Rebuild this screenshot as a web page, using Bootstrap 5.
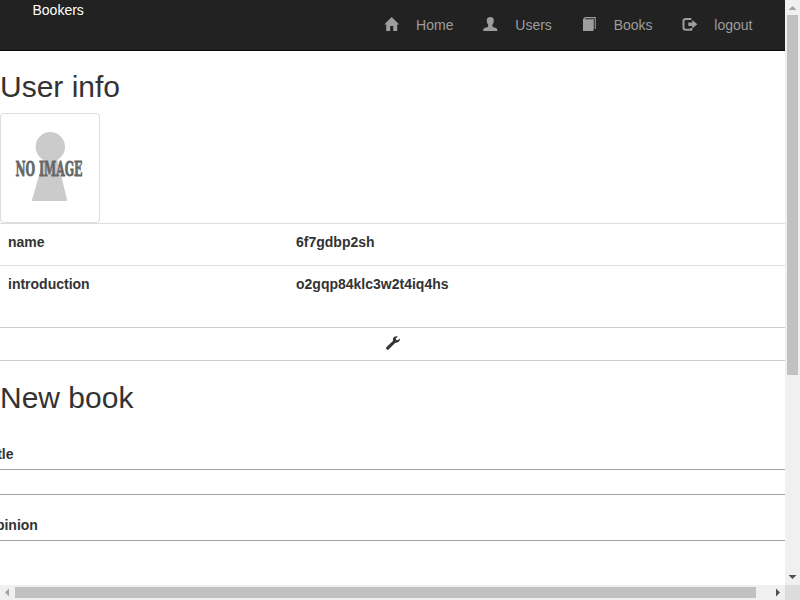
<!DOCTYPE html>
<html lang="en">
<head>
<meta charset="utf-8">
<meta name="viewport" content="width=device-width, initial-scale=1">
<title>Bookers</title>
<link href="https://cdn.jsdelivr.net/npm/bootstrap@5.3.0/dist/css/bootstrap.min.css" rel="stylesheet">
<style>
body{font:14px/20px "Liberation Sans",Arial,sans-serif;color:#333;background:#fff}
.window{display:grid;grid-template:585px 15px/785px 15px;width:800px;height:600px}
.topbar{height:51px;background:#222;border-bottom:1px solid #080808}
.brand{margin-left:32.5px;color:#fff;height:20px}
.menu{margin-right:17.5px}
.menu a{color:#9d9d9d;padding:15px;line-height:20px;text-decoration:none;white-space:nowrap}
.menu svg{width:14px;height:14px;margin-right:17.8px;flex:none;overflow:visible}
h2{font-size:30px;line-height:33px;font-weight:400;margin:0 0 10px}
.user-title{margin-top:19px}
.book-title{margin-top:20px;margin-bottom:30px}
.thumb{width:100px;height:110px;border:1px solid #ddd;border-radius:4px}
.thumb svg{display:block;width:98px;height:108px}
.info{border-top:1px solid #ddd;height:42px}
.info.tall{height:62px}
.info>div{padding:8px;font-weight:700}
.info>div:first-child{width:288px}
.edit{height:34px;border:solid #ccc;border-width:1px 0}
.edit svg{width:14px;height:14px;margin-bottom:2px}
.field-label{display:block;font-weight:700;height:25px;margin-left:-15px;white-space:nowrap}
.field{height:26px;border:solid #a2a2a2;border-width:1px 0;margin-bottom:20px}
.field.area{height:80px}
.bar{background:#f0f0f0}
.bar svg{width:15px;height:15px;flex:none}
.thumb-y{width:11px;height:360px;background:#c1c1c1}
.thumb-x{width:741px;height:11px;background:#c1c1c1}
.corner{background:#dcdcdc}
</style>
<script src="https://cdn.jsdelivr.net/npm/bootstrap@5.3.0/dist/js/bootstrap.bundle.min.js"></script>
</head>
<body class="overflow-hidden">
<div class="window">
<div class="overflow-hidden">
  <header class="topbar d-flex justify-content-between align-items-start">
    <div class="brand">Bookers</div>
    <nav class="menu d-flex">
      <a class="d-flex" href="#"><svg viewBox="0 0 14 14"><path transform="translate(.2 2)" fill="#9d9d9d" d="M7.500 0L15 7.400H13V14H9V9H6V14H2V7.400H0L7.500 0z"/></svg><span>Home</span></a>
      <a class="d-flex" href="#"><svg viewBox="0 0 14 14"><path transform="translate(.3 2)" fill="#9d9d9d" d="M7 0C9.500 0 10.500 1.500 10.500 3.500C10.500 5.500 9.900 6.600 9.200 7.500V9.400C9.700 10.400 14 10.500 14 12.500V14H0V12.500C0 10.500 4.300 10.400 4.800 9.400V7.500C4.100 6.600 3.500 5.500 3.500 3.500C3.500 1.500 4.500 0 7 0z"/></svg><span>Users</span></a>
      <a class="d-flex" href="#"><svg viewBox="0 0 14 14"><g transform="translate(.4 2)" fill="#9d9d9d"><path d="M.6 3H11V14H.6z"/><path d="M.6 3V2L2.600 0H13.400V12H12.400V1.200H3.200L2.200 2.200H11.600V12.500H11V3z"/></g></svg><span>Books</span></a>
      <a class="d-flex" href="#"><svg viewBox="0 0 14 14"><g transform="translate(-.7 2)"><path d="M9 2H3.500Q1.200 2 1.200 4.300V10.500Q1.200 12.800 3.500 12.800H9V11" fill="none" stroke="#9d9d9d" stroke-width="2"/><path fill="#9d9d9d" d="M6 5.500H10V3L15 7.300L10 11.500V9H6z"/></g></svg><span>logout</span></a>
    </nav>
  </header>
  <main>
    <h2 class="user-title">User info</h2>
    <div class="thumb"><svg viewBox="0 0 98 108"><g fill="#cbcbcb"><circle cx="49.300" cy="32.800" r="14.700"/><path d="M43 44H56L66.300 87H30.700z"/></g><text x="14.500" y="62.300" font-family="DejaVu Serif,serif" font-weight="700" font-size="20.500" textLength="67" lengthAdjust="spacingAndGlyphs" fill="#666" stroke="#666" stroke-width=".8">NO IMAGE</text></svg></div>
    <div class="info d-flex"><div>name</div><div>6f7gdbp2sh</div></div>
    <div class="info tall d-flex"><div>introduction</div><div>o2gqp84klc3w2t4iq4hs</div></div>
    <div class="edit d-flex justify-content-center align-items-center"><svg viewBox="0 0 14 14"><path d="M1.700 12.200L8 6" stroke="#333" stroke-width="3.100" stroke-linecap="round"/><path fill="#333" d="M11.800.4L9.800 2.600L10.200 4L11.600 4.300L13.800 2.500C14.100 4.300 13.300 5.600 12 6.200C11 6.700 9.800 6.800 8.800 6.500L7 5C6.700 3 7.200 1.700 8.500.8C9.400 0 10.700 0 11.800.4z"/></svg></div>
    <h2 class="book-title">New book</h2>
    <label class="field-label">Title</label>
    <div class="field"></div>
    <label class="field-label">Opinion</label>
    <div class="field area"></div>
  </main>
</div>
<div class="bar d-flex flex-column align-items-center">
  <svg viewBox="0 0 15 15"><path fill="#a3a3a3" d="M3.500 10H11.500L7.500 6z"/></svg><div class="thumb-y"></div>
  <svg class="mt-auto" viewBox="0 0 15 15"><path fill="#505050" d="M3.500 5H11.500L7.500 9z"/></svg>
</div>
<div class="bar d-flex align-items-center">
  <svg viewBox="0 0 15 15"><path fill="#a3a3a3" d="M9 3.500V11.500L5 7.500z"/></svg><div class="thumb-x"></div>
  <svg class="ms-auto" viewBox="0 0 15 15"><path fill="#505050" d="M6 3.500V11.500L10 7.500z"/></svg>
</div>
<div class="corner"></div>
</div>
</body>
</html>
